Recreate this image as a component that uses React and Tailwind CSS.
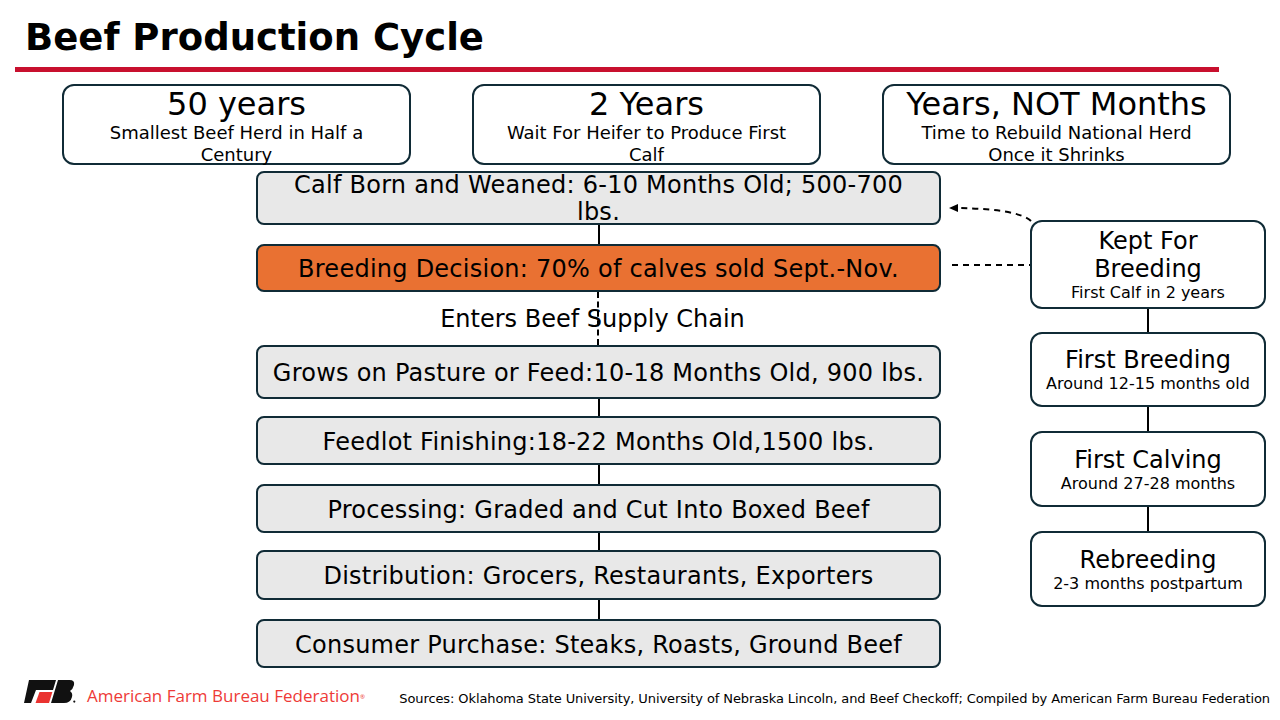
import React from "react";

const FONT = { fontFamily: '"DejaVu Sans", Verdana, sans-serif' };
const MID = { fontFamily: '"DejaVu Sans", Verdana, sans-serif', letterSpacing: "0.25px" };

function TopBox({ title, lines }) {
  return (
    <div className="w-[349px] h-[81px] border-2 border-[#102b36] rounded-[12px] bg-white flex flex-col items-center text-black" style={FONT}>
      <div className="text-[32px] leading-[34px] pt-[1px]">{title}</div>
      <div className="text-[18px] leading-[22px] text-center mt-[1px]">
        {lines.map((l, i) => (
          <div key={i}>{l}</div>
        ))}
      </div>
    </div>
  );
}

function Step({ children, h, orange }) {
  return (
    <div
      className={
        "w-[685px] border-2 border-[#102b36] rounded-[8px] flex flex-col items-center justify-center pt-[3px] text-[24px] leading-[27px] text-black whitespace-nowrap " +
        (orange ? "bg-[#e97132]" : "bg-[#e8e8e8]")
      }
      style={{ ...MID, height: h }}
    >
      {children}
    </div>
  );
}

function Line({ h }) {
  return <div className="w-[2px] bg-black mx-auto" style={{ height: h }} />;
}

function SideBox({ title, sub, h }) {
  return (
    <div
      className="w-[236px] border-2 border-[#102b36] rounded-[12px] bg-white flex flex-col items-center justify-center pt-[1px] text-black text-center"
      style={{ ...FONT, height: h }}
    >
      <div className="text-[24px] leading-[28px]">{title}</div>
      <div className="text-[16px] leading-[20px]">{sub}</div>
    </div>
  );
}

function Logo() {
  return (
    <svg width="52" height="23" viewBox="0 0 52 23">
      <polygon points="5,0 32,0 29,10 12,10 7,23 0,23" fill="#111" />
      <polygon points="15.5,12 28.4,12 25,23 11.5,23" fill="#ea3330" />
      <path d="M34 0 H45.5 Q51 0 50 5 Q49 9 46 11 Q49 13 48 17 Q46.5 23 40 23 H27 Z" fill="#111" />
      <circle cx="50.3" cy="21.6" r="1.1" fill="#111" />
    </svg>
  );
}

export default function App() {
  return (
    <div className="w-[1280px] h-[720px] bg-white relative overflow-hidden flex flex-col" style={FONT}>
      {/* Title */}
      <div className="pt-[16px] pl-[25px] text-[37px] leading-[44px] font-bold text-black" style={FONT}>
        Beef Production Cycle
      </div>
      <div className="mt-[7px] ml-[15px] w-[1204px] h-[5px] bg-[#c8102e]" />

      {/* Top stats */}
      <div className="mt-[12px] ml-[62px] flex gap-[61px]">
        <TopBox title="50 years" lines={["Smallest Beef Herd in Half a", "Century"]} />
        <TopBox title="2 Years" lines={["Wait For Heifer to Produce First", "Calf"]} />
        <TopBox title="Years, NOT Months" lines={["Time to Rebuild National Herd", "Once it Shrinks"]} />
      </div>

      {/* Main diagram */}
      <div className="mt-[6px] ml-[256px] flex gap-[89px]">
        <div className="w-[685px] flex flex-col">
          <Step h={54}>
            <div className="-mt-[2px]">Calf Born and Weaned: 6-10 Months Old; 500-700</div>
            <div>lbs.</div>
          </Step>
          <Line h={19} />
          <Step h={48} orange>
            Breeding Decision: 70% of calves sold Sept.-Nov.
          </Step>
          <div className="relative h-[53px] flex items-center justify-center">
            <div className="absolute left-[341px] top-0 h-full border-l-2 border-dashed border-black" />
            <div className="relative text-[24px] leading-[27px] text-black mt-[2px] mr-[12px]" style={FONT}>
              Enters Beef Supply Chain
            </div>
          </div>
          <Step h={54}>Grows on Pasture or Feed:10-18 Months Old, 900 lbs.</Step>
          <Line h={17} />
          <Step h={49}>Feedlot Finishing:18-22 Months Old,1500 lbs.</Step>
          <Line h={19} />
          <Step h={49}>Processing: Graded and Cut Into Boxed Beef</Step>
          <Line h={17} />
          <Step h={50}>Distribution: Grocers, Restaurants, Exporters</Step>
          <Line h={19} />
          <Step h={49}>Consumer Purchase: Steaks, Roasts, Ground Beef</Step>
        </div>

        <div className="w-[236px] mt-[49px] flex flex-col">
          <div
            className="w-[236px] h-[89px] border-2 border-[#102b36] rounded-[12px] bg-white flex flex-col items-center justify-center pt-[1px] text-black text-center"
            style={FONT}
          >
            <div className="text-[24px] leading-[28px]">Kept For</div>
            <div className="text-[24px] leading-[28px]">Breeding</div>
            <div className="text-[16px] leading-[20px]">First Calf in 2 years</div>
          </div>
          <Line h={23} />
          <SideBox h={75} title="First Breeding" sub="Around 12-15 months old" />
          <Line h={24} />
          <SideBox h={76} title="First Calving" sub="Around 27-28 months" />
          <Line h={24} />
          <SideBox h={76} title="Rebreeding" sub="2-3 months postpartum" />
        </div>
      </div>

      {/* Footer */}
      <div className="mt-[12px] flex items-center h-[24px]">
        <div className="ml-[24px] mt-[-2px]">
          <Logo />
        </div>
        <div
          className="ml-[11px] mt-[7px] text-[17px] leading-[20px] text-[#ee3a37] font-medium"
          style={{ fontFamily: '"Open Sans", "Liberation Sans", sans-serif' }}
        >
          American Farm Bureau Federation<sup className="text-[6px]">®</sup>
        </div>
        <div
          className="ml-auto mr-[10px] mt-[13px] text-[13px] leading-[16px] text-black whitespace-nowrap"
          style={{ fontFamily: '"DejaVu Sans", Verdana, sans-serif', letterSpacing: "-0.1px" }}
        >
          Sources: Oklahoma State University, University of Nebraska Lincoln, and Beef Checkoff; Compiled by American Farm Bureau Federation
        </div>
      </div>

      {/* Dashed connectors overlay */}
      <svg className="absolute left-0 top-0 pointer-events-none" width="1280" height="720">
        <path d="M952 265 H1030" stroke="#000" strokeWidth="2" strokeDasharray="6 5" fill="none" />
        <path d="M1031 221 Q1018 209 958 208" stroke="#000" strokeWidth="2" strokeDasharray="6 5" fill="none" />
        <polygon points="949,208 958,204 958,212" fill="#000" />
      </svg>
    </div>
  );
}
